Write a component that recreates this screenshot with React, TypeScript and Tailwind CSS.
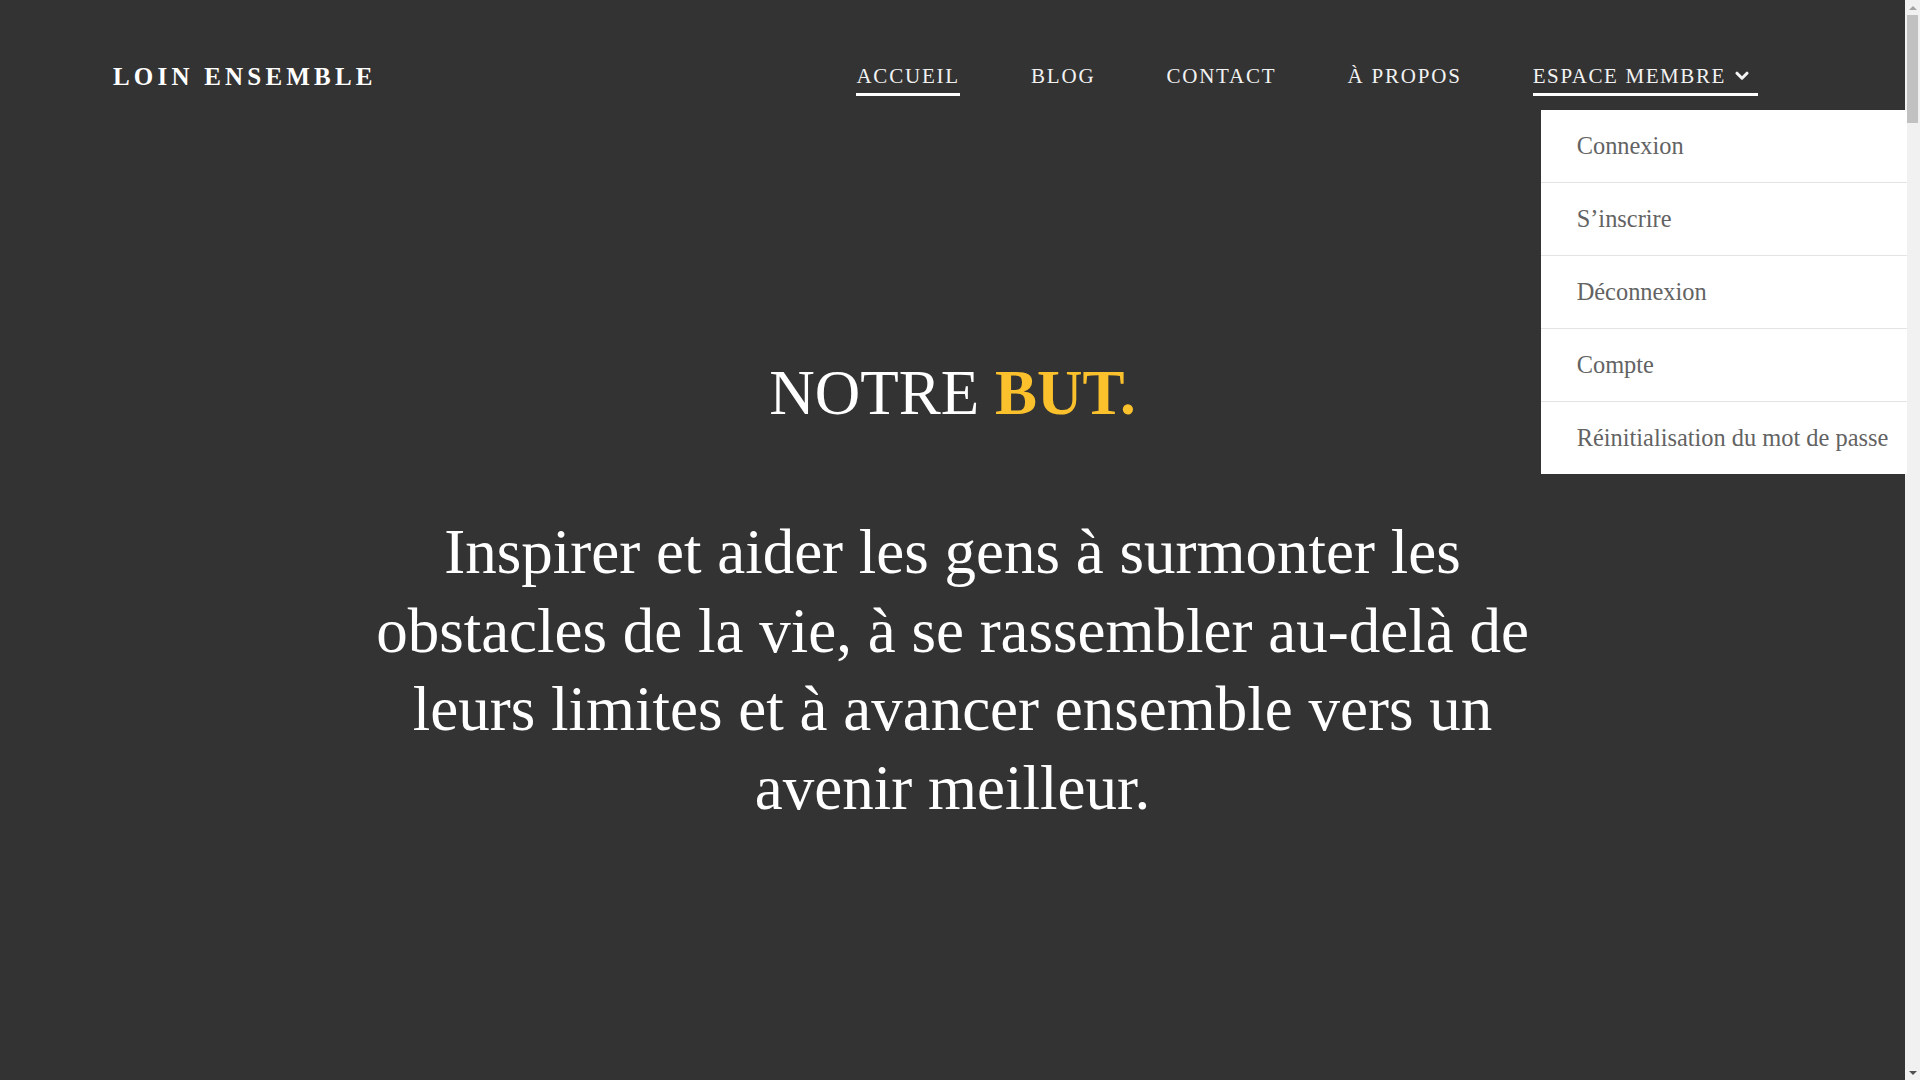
import { useState } from "react";

const links = ["ACCUEIL", "BLOG", "CONTACT", "À PROPOS"];

const memberLinks = [
    "Connexion",
    "S’inscrire",
    "Déconnexion",
    "Compte",
    "Réinitialisation du mot de passe",
];

function Chevron() {
    return (
        <svg width="14" height="10" viewBox="0 0 14 10" className="ml-[9px]">
            <path d="M2 2.2 L7 7.2 L12 2.2" fill="none" stroke="#f5f5f5" strokeWidth="3" strokeLinecap="round" strokeLinejoin="round" />
        </svg>
    );
}

function Scrollbar() {
    return (
        <div className="flex w-[15px] shrink-0 flex-col bg-[#f1f1f1]">
            <div className="flex h-[15px] items-center justify-center">
                <svg width="8" height="4" viewBox="0 0 8 4">
                    <path d="M0 4 L4 0 L8 4 Z" fill="#a3a3a3" />
                </svg>
            </div>
            <div className="mx-[2px] h-[108px] bg-[#c1c1c1]" />
            <div className="flex-1" />
            <div className="flex h-[15px] items-center justify-center">
                <svg width="8" height="4" viewBox="0 0 8 4">
                    <path d="M0 0 L8 0 L4 4 Z" fill="#505050" />
                </svg>
            </div>
        </div>
    );
}

export default function App() {

    const [active] = useState("ACCUEIL");

    return (
        <div className="flex h-screen overflow-hidden bg-[#333333] text-white" style={{ fontFamily: '"Liberation Serif", "Times New Roman", serif' }}>
            <div className="min-w-0 flex-1">
                <header className="flex items-start justify-between pl-[113px] pr-[147px] pt-[62px]">
                    <div className="text-[25px] leading-[30px] font-bold tracking-[4.2px] text-white">
                        LOIN ENSEMBLE
                    </div>

                    <nav className="mt-[2px]">
                        <ul className="flex gap-[71px]">
                            {links.map((l) => (
                                <li key={l}>
                                    <a
                                        href="#"
                                        className={
                                            "block text-[21px] leading-[24px] tracking-[1.8px] text-[#f2f2f2] pb-[5px] border-b-[3px] " +
                                            (active === l ? "border-white" : "border-transparent")
                                        }
                                    >
                                        {l}
                                    </a>
                                </li>
                            ))}

                            <li className="relative">
                                <a
                                    href="#"
                                    className="flex items-center text-[21px] leading-[24px] tracking-[1.6px] text-[#f2f2f2] pb-[5px] pr-[9px] border-b-[3px] border-white"
                                >
                                    ESPACE MEMBRE
                                    <Chevron />
                                </a>

                                <div className="absolute left-[8px] top-full mt-[14px] w-[366px] bg-white">
                                    {memberLinks.map((m, i) => (
                                        <a
                                            key={m}
                                            href="#"
                                            className={
                                                "flex items-center pl-[36px] text-[24.4px] text-[#636363] whitespace-nowrap " +
                                                (i < memberLinks.length - 1 ? "h-[73px] border-b border-[#e4e4e4]" : "h-[72px]")
                                            }
                                        >
                                            {m}
                                        </a>
                                    ))}
                                </div>
                            </li>
                        </ul>
                    </nav>
                </header>

                <main className="pt-[258px] px-8">
                    <h1 className="text-center text-[63px] leading-[1.25] font-normal">
                        NOTRE <span className="font-bold text-[#fbc12d]">BUT.</span>
                    </h1>

                    <p className="mx-auto mt-[80px] max-w-[1200px] text-center text-[63px] leading-[1.25]">
                        Inspirer et aider les gens à surmonter les obstacles de la vie, à se rassembler au-delà de leurs limites et à avancer ensemble vers un avenir meilleur.
                    </p>
                </main>
            </div>

            <Scrollbar />
        </div>
    );
}
